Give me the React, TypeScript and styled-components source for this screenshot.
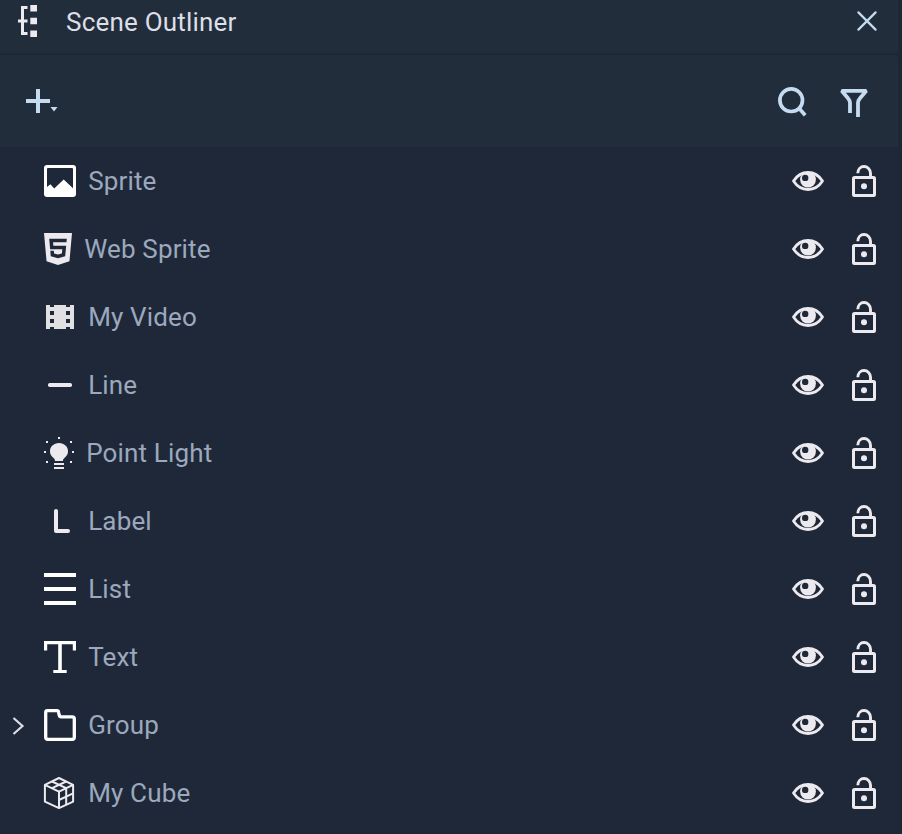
import React from "react";
import styled, { createGlobalStyle } from "styled-components";

const GlobalStyle = createGlobalStyle`
  * { box-sizing: border-box; }
  body { margin: 0; background: #1e2834; }
`;

const Panel = styled.main`
  width: 902px;
  height: 834px;
  padding-right: 4px;
  display: flex;
  flex-direction: column;
  overflow: hidden;
  background: #1e2834;
  font-family: Roboto, sans-serif;
`;

const Header = styled.header`
  height: 53px;
  flex: none;
  margin-bottom: 2px;
  padding: 0 19px 11px 17px;
  display: flex;
  align-items: center;
  background: #222d3c;
  border-radius: 0 0 4px 0;
`;

const Title = styled.h1`
  flex: 1;
  margin: 2px 0 0 27px;
  font-size: 26px;
  line-height: 34px;
  font-weight: 400;
  letter-spacing: 0.2px;
  color: #dcdfe5;
`;

const Toolbar = styled.div`
  height: 92px;
  flex: none;
  padding: 0 30px 0 26px;
  display: flex;
  align-items: center;
  background: #222d3c;
  border-radius: 0 4px 0 0;
`;

const IconButton = styled.button`
  display: flex;
  padding: 0;
  border: 0;
  background: none;
  color: #c5dbef;
`;

const ToolGroup = styled.div`
  margin-left: auto;
  display: flex;
  gap: 32px;
`;

const List = styled.ul`
  height: 685px;
  flex: none;
  margin: 0;
  padding: 0;
  list-style: none;
  background: #1f2838;
  border-radius: 0 4px 4px 0;
`;

const Row = styled.li`
  height: 68px;
  padding: 0 22px 0 12px;
  display: flex;
  align-items: center;
`;

const Expander = styled.span`
  width: 32px;
  height: 20px;
  margin-top: 2px;
  display: flex;
`;

const TypeIcon = styled.span<{ $width: number }>`
  width: ${(p) => p.$width}px;
  flex: none;
  display: flex;
  color: #edeaef;
`;

const Name = styled.span`
  flex: 1;
  margin-left: 12.2px;
  font-size: 26px;
  line-height: 34px;
  letter-spacing: 0.15px;
  color: #9ba8bd;
`;

const RowActions = styled.div`
  display: flex;
  align-items: center;
  gap: 28px;
  color: #edeaef;
`;

const Svg = styled.svg`
  display: block;
  flex: none;
  overflow: visible;
`;

const Glyph = ({ children }: { children: React.ReactNode }) => (
  <Svg width="32" height="32" viewBox="0 0 32 32" fill="currentColor">{children}</Svg>
);

const OutlinerIcon = () => (
  <Svg width="22" height="34" viewBox="0 0 22 34" fill="#edeaef">
    <path d="M4 2h6.5v3H7v10.500h3.500v3H7V28h3.500v3H4V18.500H1v-3h3z" />
    <path d="M13.300 1H20v6.500h-6.700zM13.300 13.800H20v6.400h-6.700zM13.300 26.500H20V33h-6.700z" />
  </Svg>
);

const CloseIcon = () => (
  <Svg width="24" height="24" viewBox="0 0 24 24" fill="none" stroke="currentColor" strokeWidth="2.2" strokeLinecap="round">
    <path d="M3.400 3.400l17.200 17.200M20.600 3.400L3.400 20.600" />
  </Svg>
);

const AddIcon = () => (
  <Svg width="32" height="24" viewBox="0 0 32 24" fill="currentColor">
    <path d="M10 0h4v10h10v4H14v10h-4V14H0v-4h10z" />
    <path d="M24.500 18h7l-3.500 4.500z" />
  </Svg>
);

const SearchIcon = () => (
  <Svg width="32" height="30" viewBox="0 0 32 30" fill="none" stroke="currentColor" strokeWidth="3.700">
    <circle cx="15.200" cy="14.200" r="11.300" />
    <path d="M22.600 21.800l6.600 7.400" />
  </Svg>
);

const FilterIcon = () => (
  <Svg width="28" height="30" viewBox="0 0 28 30" fill="none" stroke="currentColor" strokeWidth="3.800" strokeLinejoin="bevel">
    <path d="M10 27V16.800Q10 14.500 8 12.200L1.700 4.800H26.300L20 12.200Q18 14.500 18 16.800V31" />
  </Svg>
);

const EyeIcon = () => (
  <Svg width="32" height="20" viewBox="0 0 32 20" fill="none">
    <path d="M1.500 10C5 4.600 10 1.500 16 1.500S27 4.600 30.500 10C27 15.400 22 18.500 16 18.500S5 15.400 1.500 10z" stroke="currentColor" strokeWidth="2.800" strokeLinejoin="round" />
    <circle cx="16" cy="8.600" r="7.900" fill="currentColor" />
    <circle cx="13.200" cy="6.900" r="3.200" fill="#1f2838" />
  </Svg>
);

const LockIcon = () => (
  <Svg width="24" height="32" viewBox="0 0 24 32" fill="none" stroke="currentColor">
    <rect x="1.500" y="12.500" width="21" height="18" rx="1" strokeWidth="3" />
    <path d="M5.800 8.200C5.900 4.400 8.500 1.500 12 1.500s6.500 2.900 6.500 6.700V12" strokeWidth="2.900" />
    <circle cx="12" cy="21.200" r="3" fill="currentColor" stroke="none" />
  </Svg>
);

const ChevronIcon = () => (
  <Svg width="13" height="20" viewBox="0 0 13 20" fill="none" stroke="#dcdde3" strokeWidth="2.200">
    <path d="M1.500 2l9 8-9 8" />
  </Svg>
);

const SpriteIcon = () => (
  <Glyph>
    <path fill="#fff" fillRule="evenodd" d="M3 0h26a3 3 0 0 1 3 3v26a3 3 0 0 1-3 3H3a3 3 0 0 1-3-3V3a3 3 0 0 1 3-3zM4 3a1 1 0 0 0-1 1v18l3.400-2.700 3.800 4.200 9.500-9 9.300 8.800V4a1 1 0 0 0-1-1z" />
  </Glyph>
);

const WebIcon = () => (
  <Svg width="28" height="32" viewBox="0 32 384 448" preserveAspectRatio="none" fill="currentColor">
    <path d="M0 32l34.900 395.800L191.500 480l157.600-52.200L384 32H0zm308.200 127.900H124.400l4.100 49.400h175.600l-13.600 148.400-97.900 27v.3h-1.100l-98.700-27.300-6-75.800h47.700L138 320l53.500 14.500 53.700-14.500 6-62.200H84.300L71.500 112.200h241.100l-4.400 47.700z" />
  </Svg>
);

const VideoIcon = () => (
  <Glyph>
    <path fill="#e1e1e3" fillRule="evenodd" d="M2 4h28v24H2zM6 4v2h4V4zM6 10v4h4v-4zM6 18v4h4v-4zM6 26v2h4v-2zM22 4v2h4V4zM22 10v4h4v-4zM22 18v4h4v-4zM22 26v2h4v-2z" />
  </Glyph>
);

const LineIcon = () => <Glyph><rect x="4" y="14" width="24" height="4" rx="1.700" /></Glyph>;

const LightIcon = () => (
  <Glyph>
    <path d="M15 6c5.200 0 9 3.600 9 8.300 0 3.700-2.300 5.500-3.600 6.700-.9.900-1.400 1.700-1.400 3h-8c0-1.300-.5-2.100-1.400-3C8.300 19.800 6 18 6 14.300 6 9.600 9.800 6 15 6zM10 26h10v2H10zM10 30h10v2H10z" />
    <path d="M14 0h2v2h-2zM2 4h2v2H2zM26 4h2v2h-2zM0 14h2v2H0zM28 14h2v2h-2zM2 24h2v2H2zM26 24h2v2h-2z" />
  </Glyph>
);

const LabelIcon = () => (
  <Glyph><path d="M12 6v20h12" fill="none" stroke="currentColor" strokeWidth="4" strokeLinecap="round" strokeLinejoin="round" /></Glyph>
);

const ListIcon = () => <Glyph><path fill="#fff" d="M0 0h32v4H0zM0 14h32v4H0zM0 28h32v4H0z" /></Glyph>;

const TextIcon = () => (
  <Glyph><path fill="#fff" d="M0 0h32v9.500h-3.200V3.200H17.800v25.900h4.900V32H9.300v-2.900h4.900V3.200H3.200v6.300H0z" /></Glyph>
);

const GroupIcon = () => (
  <Glyph><path d="M3.500 1.700H13Q14.400 1.700 14.600 3.200L15.200 6.200Q15.600 7.800 17 7.800H28.300Q30.300 7.800 30.300 9.800V28.300Q30.300 30.300 28.300 30.300H3.700Q1.700 30.300 1.700 28.300V3.500Q1.700 1.700 3.500 1.700z" fill="none" stroke="#fff" strokeWidth="3.300" /></Glyph>
);

const CubeIcon = () => (
  <Glyph>
    <g fill="none" stroke="currentColor" strokeWidth="2" strokeLinejoin="round">
      <path d="M15 1l14.100 6.900v16.800L15 31.100.9 24.700V7.900z" />
      <path d="M.9 7.900L15 14.700l14.100-6.800M15 14.700v16.400M22.200 11.200v16.600M15 23l14.100-6.600M8 4.500l14.200 6.700M22.200 4.500L8 11.200" />
    </g>
  </Glyph>
);

type Item = { name: string; icon: React.ReactNode; width?: number; expandable?: boolean };

const items: Item[] = [
  { name: "Sprite", icon: <SpriteIcon /> },
  { name: "Web Sprite", icon: <WebIcon />, width: 28 },
  { name: "My Video", icon: <VideoIcon /> },
  { name: "Line", icon: <LineIcon /> },
  { name: "Point Light", icon: <LightIcon />, width: 30 },
  { name: "Label", icon: <LabelIcon /> },
  { name: "List", icon: <ListIcon /> },
  { name: "Text", icon: <TextIcon /> },
  { name: "Group", icon: <GroupIcon />, expandable: true },
  { name: "My Cube", icon: <CubeIcon /> },
];

export default function App() {
  return (
    <>
      <GlobalStyle />
      <Panel>
        <Header>
          <OutlinerIcon />
          <Title>Scene Outliner</Title>
          <IconButton aria-label="Close"><CloseIcon /></IconButton>
        </Header>
        <Toolbar>
          <IconButton aria-label="Add"><AddIcon /></IconButton>
          <ToolGroup>
            <IconButton aria-label="Search"><SearchIcon /></IconButton>
            <IconButton aria-label="Filter"><FilterIcon /></IconButton>
          </ToolGroup>
        </Toolbar>
        <List>
          {items.map((item) => (
            <Row key={item.name}>
              <Expander>{item.expandable && <ChevronIcon />}</Expander>
              <TypeIcon $width={item.width ?? 32}>{item.icon}</TypeIcon>
              <Name>{item.name}</Name>
              <RowActions>
                <EyeIcon />
                <LockIcon />
              </RowActions>
            </Row>
          ))}
        </List>
      </Panel>
    </>
  );
}
